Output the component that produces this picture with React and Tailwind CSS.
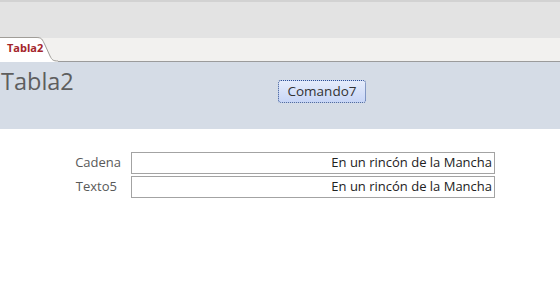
export default function App() {
  const font = { fontFamily: '"Open Sans", "Noto Sans", sans-serif' };
  return (
    <div className="w-[560px] h-[291px] bg-white overflow-hidden flex flex-col" style={font}>
      <div className="h-[2px] bg-[#d2d2d2]" />
      <div className="h-[36px] bg-[#e3e3e3]" />
      <div className="h-[24px] bg-[#f2f1ef] border-b border-[#9b9b9b] flex items-end relative">
        <div className="relative h-[24px] w-[50px]">
          <svg className="absolute left-0 top-0" width="58" height="25" viewBox="0 0 58 25">
            <path d="M0 1 H36 C42 1 42 2 45 8 L50 19 C52 23 53 24 57 24 L58 24 V25 H0 Z" fill="#ffffff" />
            <path d="M0 0.5 H36 C42 0.5 42 2 45 8 L50 19 C52 23 53 24 58 24" fill="none" stroke="#a09d98" strokeWidth="1" />
          </svg>
          <span className="absolute left-[7px] top-[4px] text-[11px] font-bold text-[#a4262c] leading-[14px]">Tabla2</span>
        </div>
      </div>
      <div className="h-[67px] bg-[#d5dce6] relative flex">
        <div className="pl-[1px] pt-[4px] text-[23.5px] leading-[30px] text-[#5e5e5e]">Tabla2</div>
        <div className="absolute left-[278px] top-[18px] w-[88px] h-[23px] rounded-[3px] border border-dotted border-[#2f4f8f] bg-gradient-to-b from-[#e5ecfb] to-[#c8d6f7] flex items-center justify-center text-[13.5px] text-[#333] leading-none">
          Comando7
        </div>
      </div>
      <div className="pt-[23px] flex flex-col gap-[2px]">
        <div className="flex items-center">
          <div className="w-[121px] text-right text-[13px] text-[#595959]">Cadena</div>
          <div className="ml-[10px] w-[364px] h-[22px] border border-[#a3a3a3] flex items-center justify-end pr-[2px] text-[13px] text-[#222]">
            En un rincón de la Mancha
          </div>
        </div>
        <div className="flex items-center">
          <div className="w-[117px] text-right text-[13px] text-[#595959]">Texto5</div>
          <div className="ml-[14px] w-[364px] h-[22px] border border-[#a3a3a3] flex items-center justify-end pr-[2px] text-[13px] text-[#222]">
            En un rincón de la Mancha
          </div>
        </div>
      </div>
    </div>
  );
}
